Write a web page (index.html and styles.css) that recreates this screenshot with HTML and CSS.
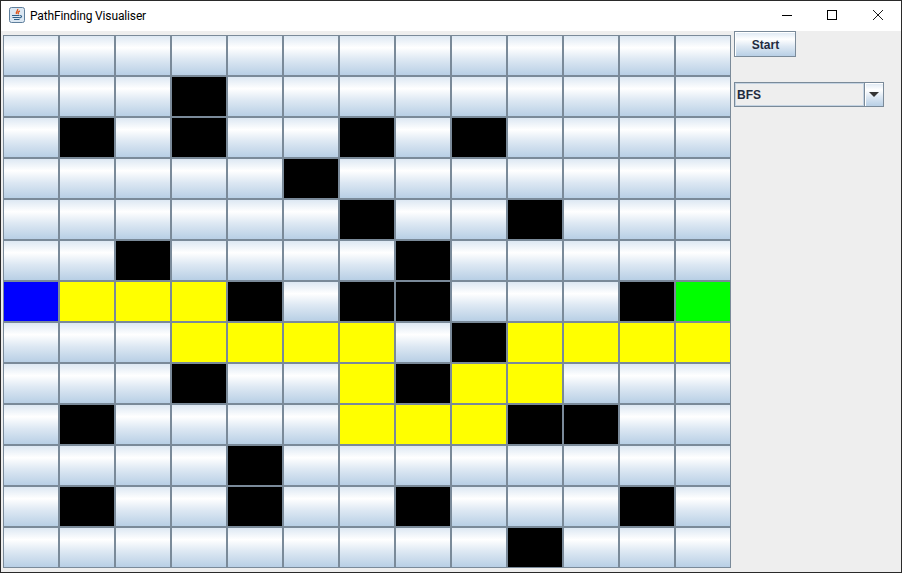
FILE: index.html
```html
<!DOCTYPE html>
<html lang="en">
<head>
    <meta charset="UTF-8">
    <title>PathFinding Visualiser</title>
    <link rel="stylesheet" href="styles.css">
</head>
<body>

<div class="window">
    <div class="titlebar">
        <svg class="app-icon" width="16" height="16" viewBox="0 0 16 16">
            <rect x="0.5" y="0.5" width="15" height="15" rx="2" fill="#dbe7f2" stroke="#5f7f9c"/>
            <path d="M8.500 2c1.200 1.700-2.200 2.700-1 5M10.800 3.800c-1.700 1-2.300 2-1.200 3.400" fill="none" stroke="#e0561b" stroke-width="1.400"/>
            <path d="M3 8.500h7.500M3.500 10.500h7M5 12.500h5.500M11 8.500c2.200 0 2.200 2-.5 2.500" fill="none" stroke="#2f5f88" stroke-width="1.100"/>
        </svg>
        <span class="title">PathFinding Visualiser</span>
        <div class="controls">
            <svg width="12" height="12" viewBox="0 0 12 12"><path d="M1 6.500h10" stroke="#000"/></svg>
            <svg width="12" height="12" viewBox="0 0 12 12"><rect x="1.500" y="1.500" width="9" height="9" fill="none" stroke="#000"/></svg>
            <svg class="close" width="12" height="12" viewBox="0 0 12 12"><path d="M1 1l10 10M11 1L1 11" stroke="#000" stroke-width="0.900"/></svg>
        </div>
    </div>
    <div class="content">
        <div class="grid">
            <button class="cell"></button><button class="cell"></button><button class="cell"></button><button class="cell"></button><button class="cell"></button><button class="cell"></button><button class="cell"></button><button class="cell"></button><button class="cell"></button><button class="cell"></button><button class="cell"></button><button class="cell"></button><button class="cell"></button>

            <button class="cell"></button><button class="cell"></button><button class="cell"></button><button class="cell wall"></button><button class="cell"></button><button class="cell"></button><button class="cell"></button><button class="cell"></button><button class="cell"></button><button class="cell"></button><button class="cell"></button><button class="cell"></button><button class="cell"></button>

            <button class="cell"></button><button class="cell wall"></button><button class="cell"></button><button class="cell wall"></button><button class="cell"></button><button class="cell"></button><button class="cell wall"></button><button class="cell"></button><button class="cell wall"></button><button class="cell"></button><button class="cell"></button><button class="cell"></button><button class="cell"></button>

            <button class="cell"></button><button class="cell"></button><button class="cell"></button><button class="cell"></button><button class="cell"></button><button class="cell wall"></button><button class="cell"></button><button class="cell"></button><button class="cell"></button><button class="cell"></button><button class="cell"></button><button class="cell"></button><button class="cell"></button>

            <button class="cell"></button><button class="cell"></button><button class="cell"></button><button class="cell"></button><button class="cell"></button><button class="cell"></button><button class="cell wall"></button><button class="cell"></button><button class="cell"></button><button class="cell wall"></button><button class="cell"></button><button class="cell"></button><button class="cell"></button>

            <button class="cell"></button><button class="cell"></button><button class="cell wall"></button><button class="cell"></button><button class="cell"></button><button class="cell"></button><button class="cell"></button><button class="cell wall"></button><button class="cell"></button><button class="cell"></button><button class="cell"></button><button class="cell"></button><button class="cell"></button>

            <button class="cell start"></button><button class="cell path"></button><button class="cell path"></button><button class="cell path"></button><button class="cell wall"></button><button class="cell"></button><button class="cell wall"></button><button class="cell wall"></button><button class="cell"></button><button class="cell"></button><button class="cell"></button><button class="cell wall"></button><button class="cell end"></button>

            <button class="cell"></button><button class="cell"></button><button class="cell"></button><button class="cell path"></button><button class="cell path"></button><button class="cell path"></button><button class="cell path"></button><button class="cell"></button><button class="cell wall"></button><button class="cell path"></button><button class="cell path"></button><button class="cell path"></button><button class="cell path"></button>

            <button class="cell"></button><button class="cell"></button><button class="cell"></button><button class="cell wall"></button><button class="cell"></button><button class="cell"></button><button class="cell path"></button><button class="cell wall"></button><button class="cell path"></button><button class="cell path"></button><button class="cell"></button><button class="cell"></button><button class="cell"></button>

            <button class="cell"></button><button class="cell wall"></button><button class="cell"></button><button class="cell"></button><button class="cell"></button><button class="cell"></button><button class="cell path"></button><button class="cell path"></button><button class="cell path"></button><button class="cell wall"></button><button class="cell wall"></button><button class="cell"></button><button class="cell"></button>

            <button class="cell"></button><button class="cell"></button><button class="cell"></button><button class="cell"></button><button class="cell wall"></button><button class="cell"></button><button class="cell"></button><button class="cell"></button><button class="cell"></button><button class="cell"></button><button class="cell"></button><button class="cell"></button><button class="cell"></button>

            <button class="cell"></button><button class="cell wall"></button><button class="cell"></button><button class="cell"></button><button class="cell wall"></button><button class="cell"></button><button class="cell"></button><button class="cell wall"></button><button class="cell"></button><button class="cell"></button><button class="cell"></button><button class="cell wall"></button><button class="cell"></button>

            <button class="cell"></button><button class="cell"></button><button class="cell"></button><button class="cell"></button><button class="cell"></button><button class="cell"></button><button class="cell"></button><button class="cell"></button><button class="cell"></button><button class="cell wall"></button><button class="cell"></button><button class="cell"></button><button class="cell"></button>
        </div>
        <div class="side">
            <button class="start-btn">Start</button>
            <div class="combo">
                <span class="combo-value">BFS</span>
                <span class="combo-arrow"><i class="caret"></i></span>
            </div>
        </div>
    </div>
</div>

</body>
</html>
```

FILE: styles.css
```css
* {
    box-sizing: border-box;
}
body {
    margin: 0;
    font-family: "Liberation Sans", Arial, sans-serif;
}
.window {
    width: 902px;
    height: 573px;
    display: flex;
    flex-direction: column;
    background: #eeeeee;
    border: 1px solid #2a2a2a;
    overflow: hidden;
}
.titlebar {
    height: 30px;
    flex: none;
    display: flex;
    align-items: center;
    background: white;
    padding-left: 8px;
}
.app-icon {
    flex: none;
    margin-bottom: 2px;
}
.title {
    margin-left: 5px;
    font-family: Roboto, "Open Sans", sans-serif;
    font-size: 12px;
    letter-spacing: -0.14px;
    color: #000;
}
.controls {
    margin-left: auto;
    display: flex;
    gap: 33px;
    padding-right: 17px;
    padding-bottom: 2px;
}
.close {
    margin-left: 1px;
}
.content {
    flex: 1;
    display: flex;
    padding-left: 2px;
}
.grid {
    display: grid;
    grid-template-columns: repeat(13, 56px);
    grid-auto-rows: 41px;
    margin-top: 4px;
    align-self: flex-start;
}
.cell, .start-btn, .combo-arrow {
    border: 1px solid #7a8a99;
    background: linear-gradient(#dde8f3 0%, #ffffff 30%, #dde8f3 60%, #b8cfe5 100%);
}
.cell {
    padding: 0;
    margin: 0;
    border-radius: 0;
}
.wall {
    background: #000;
}
.path {
    background: #ffff00;
}
.start {
    background: #0000ff;
}
.end {
    background: #00ff00;
}
.side {
    display: flex;
    flex-direction: column;
    align-items: flex-start;
    margin-left: 3px;
}
.start-btn {
    width: 62px;
    height: 26px;
    padding: 2px 0 0 1px;
    border-radius: 0;
    font-family: "Liberation Sans", Arial, sans-serif;
    font-size: 12px;
    font-weight: bold;
    color: #222b40;
    box-shadow: inset 1px 1px 0 #ffffff;
}
.combo {
    width: 150px;
    height: 25px;
    margin-top: 25px;
    display: flex;
    background: #eeeeee;
    border: 1px solid #7a8a99;
}
.combo-value {
    flex: 1;
    padding-left: 2px;
    line-height: 23px;
    font-size: 12px;
    font-weight: bold;
    color: #222b40;
    box-shadow: inset 0 0 0 1px #c4d3e2;
    padding-top: 1px;
}
.combo-arrow {
    width: 19px;
    display: flex;
    align-items: center;
    justify-content: center;
    border-width: 0 0 0 1px;
    box-shadow: inset 1px 1px 0 #ffffff;
}
.caret {
    width: 0;
    height: 0;
    border-left: 5px solid transparent;
    border-right: 5px solid transparent;
    border-top: 5px solid #333333;
}
```
